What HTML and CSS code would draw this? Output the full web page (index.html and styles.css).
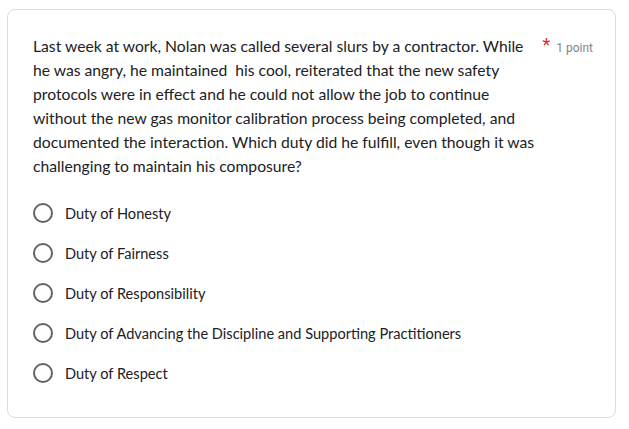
FILE: index.html
```html
<!DOCTYPE html>
<html>
<head>
<meta charset="utf-8">
<link rel="stylesheet" href="styles.css">
</head>
<body>
<div class="card">
  <div class="head">
    <div class="question">Last week at work, Nolan was called several slurs by a contractor. While he was angry, he maintained&nbsp; his cool, reiterated that the new safety protocols were in effect and he could not allow the job to continue without the new gas monitor calibration process being completed, and documented the interaction. Which duty did he fulfill, even though it was challenging to maintain his composure?</div>
    <div class="points"><span class="req">*</span><span class="pt">1 point</span></div>
  </div>
  <div class="options">
    <div class="opt"><span class="radio"></span><span class="label">Duty of Honesty</span></div>
    <div class="opt"><span class="radio"></span><span class="label">Duty of Fairness</span></div>
    <div class="opt"><span class="radio"></span><span class="label">Duty of Responsibility</span></div>
    <div class="opt"><span class="radio"></span><span class="label">Duty of Advancing the Discipline and Supporting Practitioners</span></div>
    <div class="opt"><span class="radio"></span><span class="label">Duty of Respect</span></div>
  </div>
</div>
</body>
</html>
```
FILE: styles.css
```css
html, body {
  margin: 0;
  padding: 0;
  background: #fff;
}
body {
  padding: 9px 13px 11px 7px;
  font-family: Lato, "Open Sans", sans-serif;
  color: #202124;
}
.card {
  border: 1px solid #dadce0;
  border-radius: 8px;
  height: 409px;
  box-sizing: border-box;
  padding: 24px 24px 0 25px;
}
.head {
  display: flex;
  align-items: flex-start;
}
.question {
  width: 506px;
  font-size: 15.7px;
  line-height: 24px;
}
.points {
  margin-left: auto;
  margin-right: -2px;
  padding-top: 4px;
  display: flex;
  gap: 6px;
  font-size: 12px;
  color: #80868b;
  white-space: nowrap;
}
.req {
  color: #d93025;
  font-size: 18px;
  line-height: 14px;
  font-family: Roboto, Arial, sans-serif;
}
.pt {
  line-height: 16px;
  font-family: Roboto, Arial, sans-serif;
  padding-top: 2px;
}
.options {
  display: flex;
  flex-direction: column;
  margin-top: 15px;
}
.opt {
  display: flex;
  align-items: center;
  height: 40px;
}
.radio {
  width: 16px;
  height: 16px;
  border: 2px solid #5f6368;
  border-radius: 50%;
  flex: none;
}
.label {
  margin-left: 12px;
  font-size: 14.6px;
  color: #202124;
}
```
